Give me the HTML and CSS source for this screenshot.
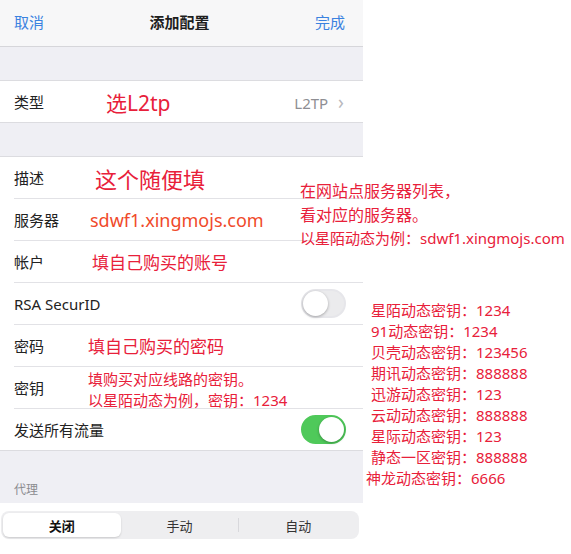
FILE: index.html
```html
<!DOCTYPE html>
<html lang="zh-CN">
<head>
<meta charset="UTF-8">
<meta name="viewport" content="width=device-width, initial-scale=1.0">
<title>添加配置</title>
<link rel="stylesheet" href="styles.css">
</head>
<body>
<div class="page">
    <div class="phone">
        <div class="navbar">
            <span class="nav-btn">取消</span>
            <span class="nav-title">添加配置</span>
            <span class="nav-btn">完成</span>
        </div>

        <div class="gap gap-top"></div>
        <div class="group">
            <div class="row">
                <span class="label">类型</span>
                <span class="note note-big note-type">选L2tp</span>
                <span class="value">L2TP <span class="chevron">&#x203A;</span></span>
            </div>
        </div>

        <div class="gap gap-mid"></div>
        <div class="group">
            <div class="row">
                <span class="label">描述</span>
                <span class="note note-big note-desc">这个随便填</span>
            </div>
            <div class="row">
                <span class="label">服务器</span>
                <span class="note note-server">sdwf1.xingmojs.com</span>
            </div>
            <div class="row">
                <span class="label">帐户</span>
                <span class="note note-mid note-account">填自己购买的账号</span>
            </div>
            <div class="row">
                <span class="label">RSA SecurID</span>
                <span class="toggle"><span class="knob"></span></span>
            </div>
            <div class="row">
                <span class="label">密码</span>
                <span class="note note-mid">填自己购买的密码</span>
            </div>
            <div class="row">
                <span class="label">密钥</span>
                <span class="note note-small">填购买对应线路的密钥。<br>以星陌动态为例，密钥：1234</span>
            </div>
            <div class="row last">
                <span class="label">发送所有流量</span>
                <span class="toggle on"><span class="knob"></span></span>
            </div>
        </div>

        <div class="section-head">代理</div>
        <div class="segment-wrap">
            <div class="segment">
                <span class="seg active">关闭</span>
                <span class="seg">手动</span>
                <span class="seg sep">自动</span>
            </div>
        </div>
    </div>

    <div class="aside">
        <div class="callout">
            <div>在网站点服务器列表，</div>
            <div>看对应的服务器。</div>
            <div class="callout-small">以星陌动态为例：sdwf1.xingmojs.com</div>
        </div>
        <ul class="keys">
            <li>星陌动态密钥：1234</li>
            <li>91动态密钥：1234</li>
            <li>贝壳动态密钥：123456</li>
            <li>期讯动态密钥：888888</li>
            <li>迅游动态密钥：123</li>
            <li>云动动态密钥：888888</li>
            <li>星际动态密钥：123</li>
            <li>静态一区密钥：888888</li>
            <li class="shift">神龙动态密钥：6666</li>
        </ul>
    </div>
</div>
</body>
</html>
```

FILE: styles.css
```css
body {
    margin: 0;
    background: #fff;
    font-family: "Noto Sans", "Noto Sans CJK SC", sans-serif;
    color: #222;
}

.page {
    display: flex;
    width: 571px;
    height: 554px;
    overflow: hidden;
}

/* left: the iOS settings screen */
.phone {
    width: 363px;
    flex-shrink: 0;
}

.navbar {
    display: flex;
    align-items: center;
    justify-content: space-between;
    padding: 0 18px 4px 14px;
    background: #f7f7f8;
    border-bottom: 1px solid #d6d6da;
    height: 42px;
    font-size: 15px;
}

.nav-btn {
    color: #3b82e0;
}

.nav-title {
    font-weight: 600;
    color: #1e1e1e;
}

.gap {
    background: #efeff4;
}

.gap-top {
    height: 33px;
}

.gap-mid {
    height: 33px;
}

.group {
    background: #fff;
    border-top: 1px solid #dcdce0;
    border-bottom: 1px solid #dcdce0;
}

.row {
    display: flex;
    align-items: center;
    height: 41px;
    margin-left: 14px;
    padding-right: 17px;
    border-bottom: 1px solid #e2e2e6;
    font-size: 15px;
}

.group .row:only-child,
.row.last {
    border-bottom: none;
}

.label {
    width: 74px;
    flex-shrink: 0;
    white-space: nowrap;
}

.value {
    margin-left: auto;
    color: #8e8e93;
    padding-right: 2px;
}

.chevron {
    color: #b8b8bd;
    font-size: 19px;
    margin-left: 6px;
}

.note {
    color: #e8203a;
}

.note-big {
    font-size: 21px;
}

.note-type {
    margin-left: 18px;
}

.note-desc {
    margin-left: 7px;
    font-size: 22px;
}

.note-server {
    color: #f04a2a;
    font-size: 18px;
    margin-left: 2px;
}

.note-mid {
    font-size: 17px;
}

.note-account {
    margin-left: 4px;
}

.note-small {
    font-size: 15px;
    line-height: 21px;
    padding-top: 4px;
}

.toggle {
    margin-left: auto;
    width: 41px;
    height: 25px;
    border: 2px solid #e6e6ea;
    border-radius: 15px;
    background: #ebebed;
    position: relative;
}

.toggle .knob {
    position: absolute;
    top: 0;
    left: 0;
    width: 25px;
    height: 25px;
    border-radius: 50%;
    background: #fff;
    box-shadow: 0 1px 3px rgba(0, 0, 0, 0.3);
}

.toggle.on {
    background: #4fc95a;
    border-color: #4fc95a;
}

.toggle.on .knob {
    left: 16px;
}

.section-head {
    background: #efeff4;
    padding: 30px 14px 4px;
    font-size: 12px;
    line-height: 18px;
    color: #8a8a8e;
}

.segment-wrap {
    padding: 8px 4px 0 1px;
}

.segment {
    display: flex;
    height: 24px;
    padding: 2px;
    background: #eeeef0;
    border-radius: 8px;
}

.seg {
    flex: 1;
    display: flex;
    align-items: center;
    justify-content: center;
    font-size: 13px;
    color: #333;
}

.seg.active {
    background: #fff;
    border-radius: 6px;
    font-weight: 600;
    color: #111;
    box-shadow: 0 1px 2px rgba(0, 0, 0, 0.15);
}

.seg.sep {
    border-left: 1px solid #d8d8dc;
    height: 14px;
    align-self: center;
}

/* right: annotations */
.aside {
    flex: 1;
    padding-top: 179px;
    color: #e8203a;
}

.callout {
    margin-left: -63px;
    font-size: 16px;
    line-height: 24px;
    white-space: nowrap;
}

.callout-small {
    font-size: 15px;
    line-height: 22px;
}

.keys {
    list-style: none;
    margin: 51px 0 0 8px;
    padding: 0;
    font-size: 15px;
    line-height: 21px;
    white-space: nowrap;
}

.keys .shift {
    margin-left: -5px;
}
```
